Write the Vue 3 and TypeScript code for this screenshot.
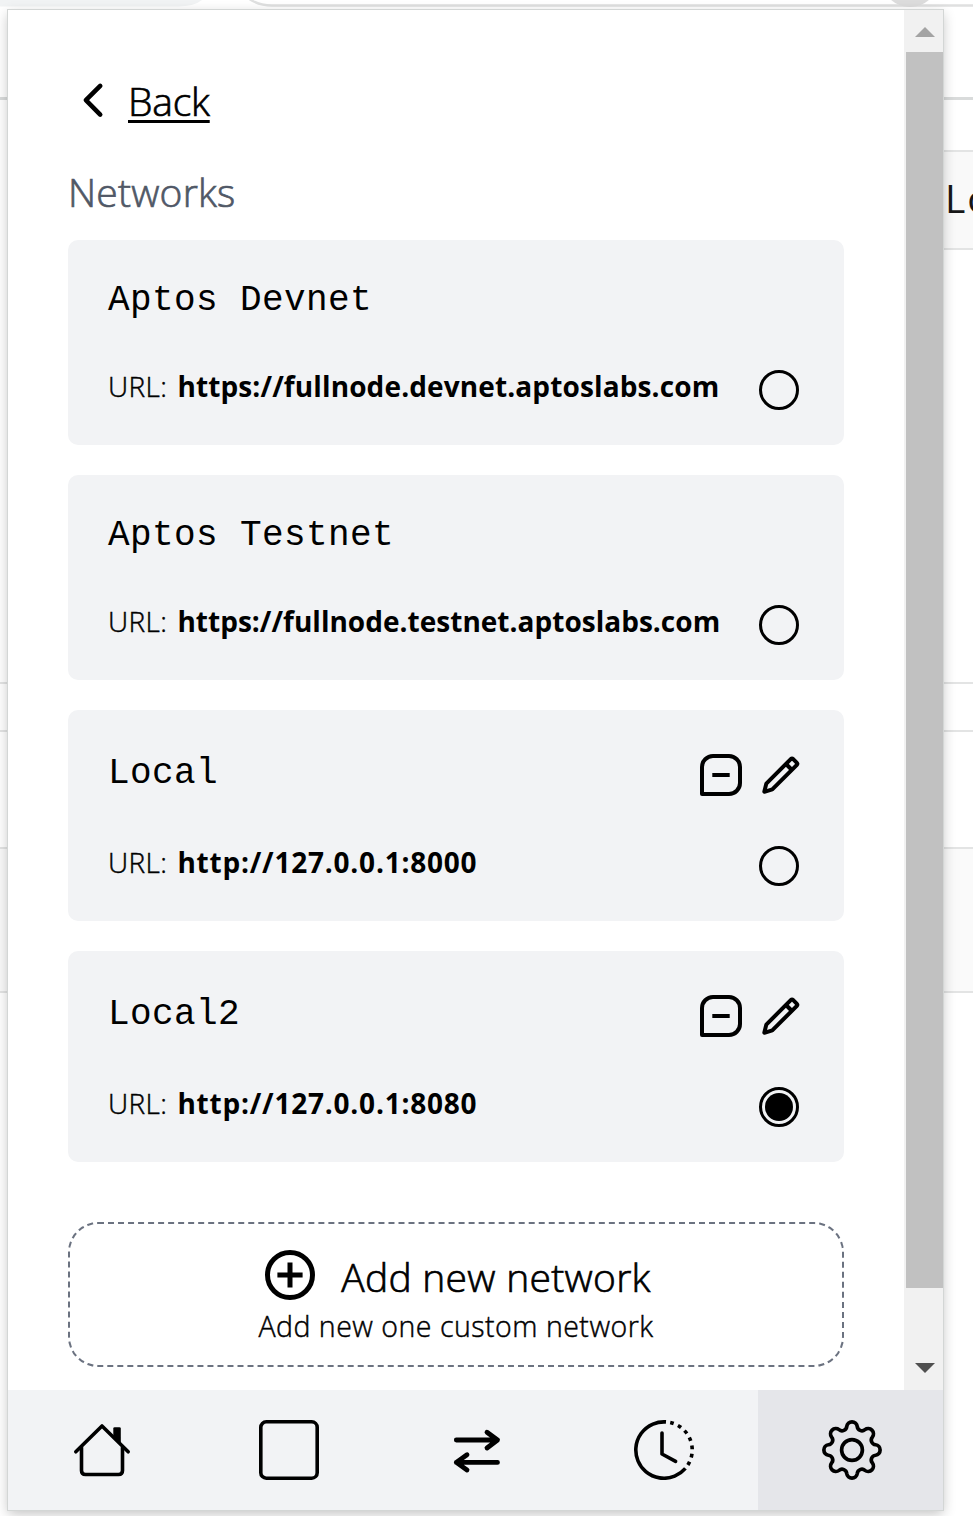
<script setup lang="ts">
interface Network {
  name: string
  url: string
  custom: boolean
  tone: string
}

const networks: Network[] = [
  { name: 'Aptos Devnet', url: 'https://fullnode.devnet.aptoslabs.com', custom: false, tone: 'devnet' },
  { name: 'Aptos Testnet', url: 'https://fullnode.testnet.aptoslabs.com', custom: false, tone: 'testnet' },
  { name: 'Local', url: 'http://127.0.0.1:8000', custom: true, tone: 'local' },
  { name: 'Local2', url: 'http://127.0.0.1:8080', custom: true, tone: 'local' },
]
const selected = 'Local2'

// Eight round lobes joined by concave fillets, centred in a 60x60 box.
function gearOutline(): string {
  const lobeR = 5.3
  const filletR = 4.7
  const lobeDist = 23.1
  const filletDist = 25.9
  const at = (r: number, deg: number) => {
    const a = (deg * Math.PI) / 180
    return [30 + r * Math.sin(a), 30 - r * Math.cos(a)]
  }
  const mix = (p: number[], q: number[]) => {
    const t = lobeR / (lobeR + filletR)
    return `${(p[0] + (q[0] - p[0]) * t).toFixed(2)} ${(p[1] + (q[1] - p[1]) * t).toFixed(2)}`
  }
  let d = ''
  for (let i = 0; i < 8; i++) {
    const lobe = at(lobeDist, i * 45)
    const before = at(filletDist, i * 45 - 22.5)
    const after = at(filletDist, i * 45 + 22.5)
    const next = at(lobeDist, i * 45 + 45)
    if (i === 0) d += `M${mix(lobe, before)}`
    d += `A${lobeR} ${lobeR} 0 0 1 ${mix(lobe, after)}`
    d += `A${filletR} ${filletR} 0 0 0 ${mix(next, after)}`
  }
  return d + 'Z'
}
const gear = gearOutline()
</script>

<template>
  <div class="page">
    <div class="backdrop">
      <svg class="chrome" width="973" height="8" viewBox="0 0 973 8">
        <path d="M0 0H202Q194 6.5 178 6.5H0Z" fill="#f1f3f4" />
        <path d="M248 -2Q258 5.5 272 5.5H973" fill="none" stroke="#dfe0e0" stroke-width="2.4" />
        <circle cx="910" cy="-22" r="29" fill="#dcdcdc" />
      </svg>
      <div class="strip toolbar"></div>
      <div class="strip bookmarks"></div>
      <div class="strip tabrow"><span>Lo</span></div>
      <div class="strip gap-a"></div>
      <div class="strip gap-b"></div>
      <div class="strip gap-c"></div>
      <div class="strip tinted"></div>
    </div>

    <main class="popup">
      <div class="view">
        <section class="content">
          <a class="back">
            <svg width="24" height="36" viewBox="0 0 24 36" fill="none" stroke="#000" stroke-width="4.6" stroke-linecap="round" stroke-linejoin="round">
              <path d="M19.2 3.9 4.9 18.2 19.2 32.6" />
            </svg>
            <span>Back</span>
          </a>
          <h1>Networks</h1>
          <div class="list">
            <article v-for="n in networks" :key="n.name" class="card" :class="{ custom: n.custom }">
              <div class="row head">
                <h2>{{ n.name }}</h2>
                <div v-if="n.custom" class="tools">
                  <svg width="42" height="42" viewBox="0 0 42 42" fill="none" stroke="#000" stroke-width="4">
                    <path d="M2 40V13A11 11 0 0 1 13 2H29A11 11 0 0 1 40 13V29A11 11 0 0 1 29 40Z" stroke-linejoin="round" />
                    <path d="M12.3 21H29.7" />
                  </svg>
                  <svg width="40" height="42" viewBox="0 0 40 42" fill="none" stroke="#000" stroke-width="4" stroke-linejoin="round">
                    <path d="M3.3 37.8 5.3 29.6 30 4.9Q31 3.9 32 4.9L35.9 8.8Q36.9 9.8 35.9 10.8L11.3 35.4Z" />
                    <path d="M25 10 31 16" />
                  </svg>
                </div>
              </div>
              <div class="row foot">
                <p>URL:<b :class="n.tone">{{ n.url }}</b></p>
                <span class="radio" :class="{ on: n.name === selected }"></span>
              </div>
            </article>
          </div>
          <button class="add">
            <span class="add-title">
              <svg width="50" height="50" viewBox="0 0 50 50" fill="none" stroke="#000" stroke-width="5">
                <circle cx="25" cy="25" r="22.5" />
                <path d="M25 12.4V37.6M12.4 25H37.6" />
              </svg>
              <span>Add new network</span>
            </span>
            <span class="add-note">Add new one custom network</span>
          </button>
        </section>
        <div class="scroll">
          <svg width="20" height="10" viewBox="0 0 20 10"><path d="M0 10 10 0 20 10Z" fill="#a3a3a3" /></svg>
          <div class="thumb"></div>
          <svg width="20" height="10" viewBox="0 0 20 10"><path d="M0 0H20L10 10Z" fill="#505050" /></svg>
        </div>
      </div>

      <nav>
        <a>
          <svg width="60" height="60" viewBox="0 0 60 60" fill="none" stroke="#000" stroke-width="3.6" stroke-linecap="round" stroke-linejoin="round">
            <path d="M3.8 31.8 30 6 56.2 31.8" />
            <path d="M9.5 27.5V50.5Q9.5 54.5 13.5 54.5H46.5Q50.5 54.5 50.5 50.5V27.5" />
            <path d="M41.3 8.6Q41.3 7.2 42.7 7.2H47.4Q48.8 7.2 48.8 8.6V24L41.3 17Z" fill="#000" stroke="none" />
          </svg>
        </a>
        <a>
          <svg width="60" height="60" viewBox="0 0 60 60" fill="none" stroke="#000" stroke-width="3.6">
            <rect x="1.8" y="1.8" width="56.4" height="56.4" rx="5.5" />
          </svg>
        </a>
        <a>
          <svg width="60" height="60" viewBox="0 0 60 60" fill="none" stroke="#000" stroke-width="4.8" stroke-linecap="round" stroke-linejoin="round">
            <path d="M9.3 20H50.5M40 12.2 50.5 20 40 28M50.5 42.4H9.3M20 34.7 9.3 42.4 20 50" />
          </svg>
        </a>
        <a>
          <svg width="60" height="60" viewBox="0 0 60 60" fill="none" stroke="#000" stroke-width="3.6">
            <path d="M32 1.9A28.2 28.2 0 1 0 51.4 48.4" />
            <path d="M36.2 2.5A28.2 28.2 0 0 1 53.65 45.4" stroke-dasharray="3.7 4.65" />
            <path d="M28 13V34L41.6 41.3" stroke-linecap="round" stroke-linejoin="round" />
          </svg>
        </a>
        <a class="active">
          <svg width="60" height="60" viewBox="0 0 60 60" fill="none" stroke="#000" stroke-width="3.7">
            <path :d="gear" />
            <circle cx="30" cy="30" r="10.4" />
          </svg>
        </a>
      </nav>
    </main>
  </div>
</template>

<style>
body {
  margin: 0;
  background: #fff;
}
</style>

<style scoped>
.page {
  position: relative;
  box-sizing: border-box;
  width: 973px;
  height: 1516px;
  padding: 10px 0 0 8px;
  overflow: hidden;
  background: #fff;
  color: #000;
  font-family: "Open Sans", "Noto Sans", sans-serif;
  font-weight: 300;
}
.backdrop {
  position: absolute;
  inset: 0;
}
.chrome {
  display: block;
}
.strip {
  box-sizing: border-box;
  border-bottom: 2px solid #e3e4e4;
}
.toolbar { height: 92px; border-bottom: 3px solid #d9dbdb; }
.bookmarks { height: 52px; margin-left: 500px; }
.tabrow { height: 98px; margin-left: 500px; background: #f9f9f9; }
.tabrow span {
  display: block;
  padding-left: 445px;
  font-size: 39px;
  font-weight: 400;
  line-height: 92px;
  letter-spacing: 2px;
  white-space: nowrap;
  color: #171717;
}
.gap-a { height: 434px; }
.gap-b { height: 48px; }
.gap-c { height: 117px; }
.tinted { height: 144px; background: #fafafa; }

.popup {
  position: relative;
  width: 935px;
  height: 1500px;
  background: #fff;
  box-shadow: 0 0 0 1px #d3d6d5, 0 4px 12px rgba(0, 0, 0, 0.24);
}
.view {
  display: flex;
  height: 1380px;
}
.content {
  flex: 1;
  padding: 68px 60px 0;
}
.back {
  display: flex;
  align-items: center;
  height: 50px;
  padding-left: 13px;
}
.back svg {
  margin-top: -6px;
}
.back span,
h1,
.add-title {
  -webkit-text-stroke: 0.7px currentColor;
}
.back span {
  margin: -4px 0 0 23px;
  font-size: 39px;
  line-height: 50px;
  letter-spacing: -0.2px;
  text-decoration: underline;
  text-decoration-thickness: 3px;
  text-underline-offset: 4px;
}
h1 {
  margin: 39px 0 0;
  height: 73px;
  font-size: 39px;
  font-weight: inherit;
  line-height: 50px;
  letter-spacing: 0.2px;
  color: #505866;
}
.list {
  display: grid;
  gap: 30px;
}
.card {
  box-sizing: border-box;
  width: 776px;
  height: 205px;
  padding: 38px 45px 0 40px;
  border-radius: 10px;
  background: #f2f3f5;
}
.card.custom {
  height: 211px;
}
.row {
  display: flex;
  justify-content: space-between;
  align-items: center;
}
.head { height: 42px; }
.custom .head { height: 54px; }
.foot { height: 40px; margin-top: 50px; }
.custom .foot { margin-top: 44px; }
h2 {
  margin: 3px 0 0;
  font: 400 36px/42px "Liberation Mono", monospace;
  letter-spacing: 0.4px;
}
.custom h2 {
  margin-top: -3px;
}
.tools {
  display: flex;
  gap: 19px;
  margin-right: -2px;
}
p {
  margin: -8px 0 0;
  font-size: 28px;
  line-height: 40px;
  letter-spacing: 0.4px;
  white-space: nowrap;
  -webkit-text-stroke: 0.45px currentColor;
}
p b {
  margin-left: 10px;
  font-weight: 700;
  -webkit-text-stroke: 0;
}
.devnet { letter-spacing: 0.12px; }
.testnet { letter-spacing: 0.02px; }
.local { letter-spacing: 0.78px; }
.radio {
  box-sizing: border-box;
  width: 40px;
  height: 40px;
  border: 3px solid #000;
  border-radius: 50%;
}
.radio.on {
  padding: 3px;
  background: #000 content-box;
}
.add {
  display: flex;
  flex-direction: column;
  align-items: center;
  box-sizing: border-box;
  width: 776px;
  height: 145px;
  margin: 60px 0 0;
  padding: 26px 0 0;
  border: 2px dashed #6b7280;
  border-radius: 30px;
  background: transparent;
  color: #000;
  font-family: inherit;
  font-weight: inherit;
}
.add-title {
  display: flex;
  gap: 26px;
  height: 50px;
  margin-left: 4px;
  font-size: 39px;
  line-height: 54px;
  letter-spacing: 0.28px;
  white-space: nowrap;
}
.add-note {
  margin-top: 6px;
  font-size: 28.5px;
  line-height: 40px;
  letter-spacing: 0.5px;
  white-space: nowrap;
  -webkit-text-stroke: 0.45px currentColor;
}
.scroll {
  display: flex;
  flex-direction: column;
  align-items: center;
  box-sizing: border-box;
  width: 39px;
  padding: 17px 0;
  background: #f1f1f1;
}
.scroll svg {
  margin-left: 3px;
}
.thumb {
  align-self: flex-end;
  width: 37px;
  height: 1236px;
  margin: 15px 0 75px;
  background: #c1c1c1;
}
nav {
  display: flex;
  height: 120px;
  overflow: hidden;
  background: #f2f3f5;
}
nav a {
  display: flex;
  flex: 0 0 187.5px;
  align-items: center;
  justify-content: center;
}
nav a.active {
  background: #e5e6ea;
}
</style>
